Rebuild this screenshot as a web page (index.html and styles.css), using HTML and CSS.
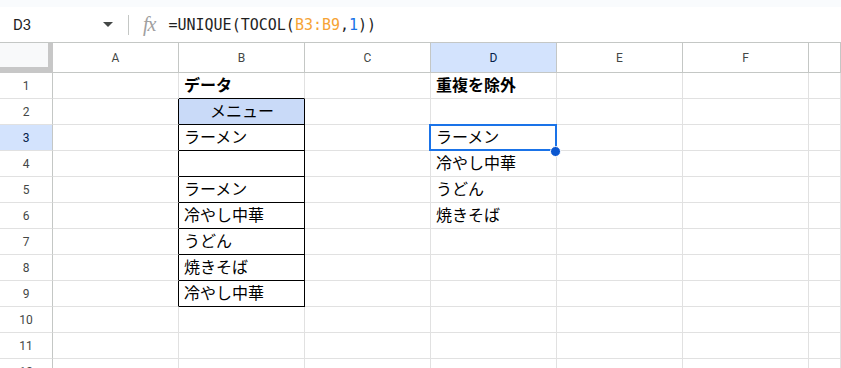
FILE: index.html
```html
<!DOCTYPE html>
<html lang="ja">
<head>
<meta charset="utf-8">
<title>Sheet</title>
<link rel="stylesheet" href="styles.css">
</head>
<body>
<div class="topstrip"></div>
<div class="fbar">
  <div class="namebox"><span class="ref">D3</span><span class="caret"></span></div>
  <div class="sep"></div>
  <span class="fx">fx</span>
  <span class="formula">=UNIQUE(TOCOL(<span class="rng">B3:B9</span>,<span class="num">1</span>))</span>
</div>
<div class="grid">
  <div class="corner"></div>
  <div class="ch">A</div><div class="ch">B</div><div class="ch">C</div><div class="ch on">D</div><div class="ch">E</div><div class="ch">F</div><div class="ch"></div>

  <div class="rh">1</div><div class="c"></div><div class="c b tb">データ</div><div class="c"></div><div class="c b">重複を除外</div><div class="c"></div><div class="c"></div><div class="c"></div>
  <div class="rh">2</div><div class="c lb"></div><div class="c box hdr">メニュー</div><div class="c"></div><div class="c"></div><div class="c"></div><div class="c"></div><div class="c"></div>
  <div class="rh on">3</div><div class="c lb"></div><div class="c box">ラーメン</div><div class="c"></div><div class="c cur">ラーメン<span class="selbox"></span><span class="handle"></span></div><div class="c"></div><div class="c"></div><div class="c"></div>
  <div class="rh">4</div><div class="c lb"></div><div class="c box"></div><div class="c"></div><div class="c">冷やし中華</div><div class="c"></div><div class="c"></div><div class="c"></div>
  <div class="rh">5</div><div class="c lb"></div><div class="c box">ラーメン</div><div class="c"></div><div class="c">うどん</div><div class="c"></div><div class="c"></div><div class="c"></div>
  <div class="rh">6</div><div class="c lb"></div><div class="c box">冷やし中華</div><div class="c"></div><div class="c">焼きそば</div><div class="c"></div><div class="c"></div><div class="c"></div>
  <div class="rh">7</div><div class="c lb"></div><div class="c box">うどん</div><div class="c"></div><div class="c"></div><div class="c"></div><div class="c"></div><div class="c"></div>
  <div class="rh">8</div><div class="c lb"></div><div class="c box">焼きそば</div><div class="c"></div><div class="c"></div><div class="c"></div><div class="c"></div><div class="c"></div>
  <div class="rh">9</div><div class="c lb"></div><div class="c box">冷やし中華</div><div class="c"></div><div class="c"></div><div class="c"></div><div class="c"></div><div class="c"></div>
  <div class="rh">10</div><div class="c"></div><div class="c"></div><div class="c"></div><div class="c"></div><div class="c"></div><div class="c"></div><div class="c"></div>
  <div class="rh">11</div><div class="c"></div><div class="c"></div><div class="c"></div><div class="c"></div><div class="c"></div><div class="c"></div><div class="c"></div>
  <div class="rh">12</div><div class="c"></div><div class="c"></div><div class="c"></div><div class="c"></div><div class="c"></div><div class="c"></div><div class="c"></div>
</div>
</body>
</html>
```

FILE: styles.css
```css
html, body {
  margin: 0;
  padding: 0;
}
body {
  width: 841px;
  height: 368px;
  overflow: hidden;
  background: #fff;
  font-family: Roboto, "Noto Sans CJK JP", sans-serif;
}
.topstrip {
  height: 7px;
  background: #f9fbfd;
}
.fbar {
  height: 36px;
  box-sizing: border-box;
  border-bottom: 1px solid #c4c7c5;
  display: flex;
  align-items: center;
}
.namebox {
  width: 128px;
  box-sizing: border-box;
  padding-left: 13px;
  display: flex;
  align-items: center;
}
.ref {
  flex: 1;
  font-size: 15px;
  color: #1f1f1f;
}
.caret {
  width: 0;
  height: 0;
  border-left: 5px solid transparent;
  border-right: 5px solid transparent;
  border-top: 5px solid #444746;
  margin-right: 15px;
}
.sep {
  width: 1px;
  height: 20px;
  background: #c4c7c5;
}
.fx {
  margin-left: 14px;
  font-family: "Liberation Serif", serif;
  font-style: italic;
  font-size: 20px;
  color: #a0a0a0;
  letter-spacing: -1px;
}
.formula {
  margin-left: 13px;
  font-family: "DejaVu Sans Mono", monospace;
  font-size: 15px;
  color: #1f1f1f;
}
.rng { color: #f6a336; }
.num { color: #1a73e8; }

.grid {
  display: grid;
  grid-template-columns: 53px repeat(6, 126px) 1fr;
  grid-template-rows: 30px repeat(12, 26px);
}
.grid > div {
  box-sizing: border-box;
  border-right: 1px solid #e1e1e1;
  border-bottom: 1px solid #e1e1e1;
}
.grid > .corner {
  background: #f8f9fa;
  border-right: 5px solid #c7c7c7;
  border-bottom: 6px solid #c7c7c7;
}
.grid > .ch {
  display: flex;
  align-items: center;
  justify-content: center;
  font-size: 12px;
  color: #444746;
  border-right-color: #c4c7c5;
  border-bottom-color: #c4c7c5;
}
.grid > .rh {
  display: flex;
  align-items: center;
  justify-content: center;
  font-size: 12px;
  color: #444746;
  border-right-color: #c4c7c5;
}
.grid > .on {
  background: #d3e3fd;
  color: #041e49;
}
.c {
  display: flex;
  align-items: flex-end;
  padding: 0 4px 1px 5px;
  font-family: "Liberation Sans", "Noto Sans CJK JP", sans-serif;
  font-size: 16px;
  line-height: 22px;
  color: #000;
  white-space: nowrap;
}
.b { font-weight: bold; }
.grid > .tb { border-bottom-color: #000; }
.grid > .lb { border-right-color: #000; }
.grid > .box {
  border-right-color: #000;
  border-bottom-color: #000;
}
.hdr {
  background: #c9daf8;
  justify-content: center;
}
.cur {
  position: relative;
}
.selbox {
  position: absolute;
  top: -1px;
  left: -2px;
  right: -1px;
  bottom: -1px;
  border: 2px solid #1a73e8;
  pointer-events: none;
}
.handle {
  position: absolute;
  right: -5px;
  bottom: -7px;
  width: 9px;
  height: 9px;
  border: 1px solid #fff;
  border-radius: 50%;
  background: #0b57d0;
  z-index: 2;
}
```
